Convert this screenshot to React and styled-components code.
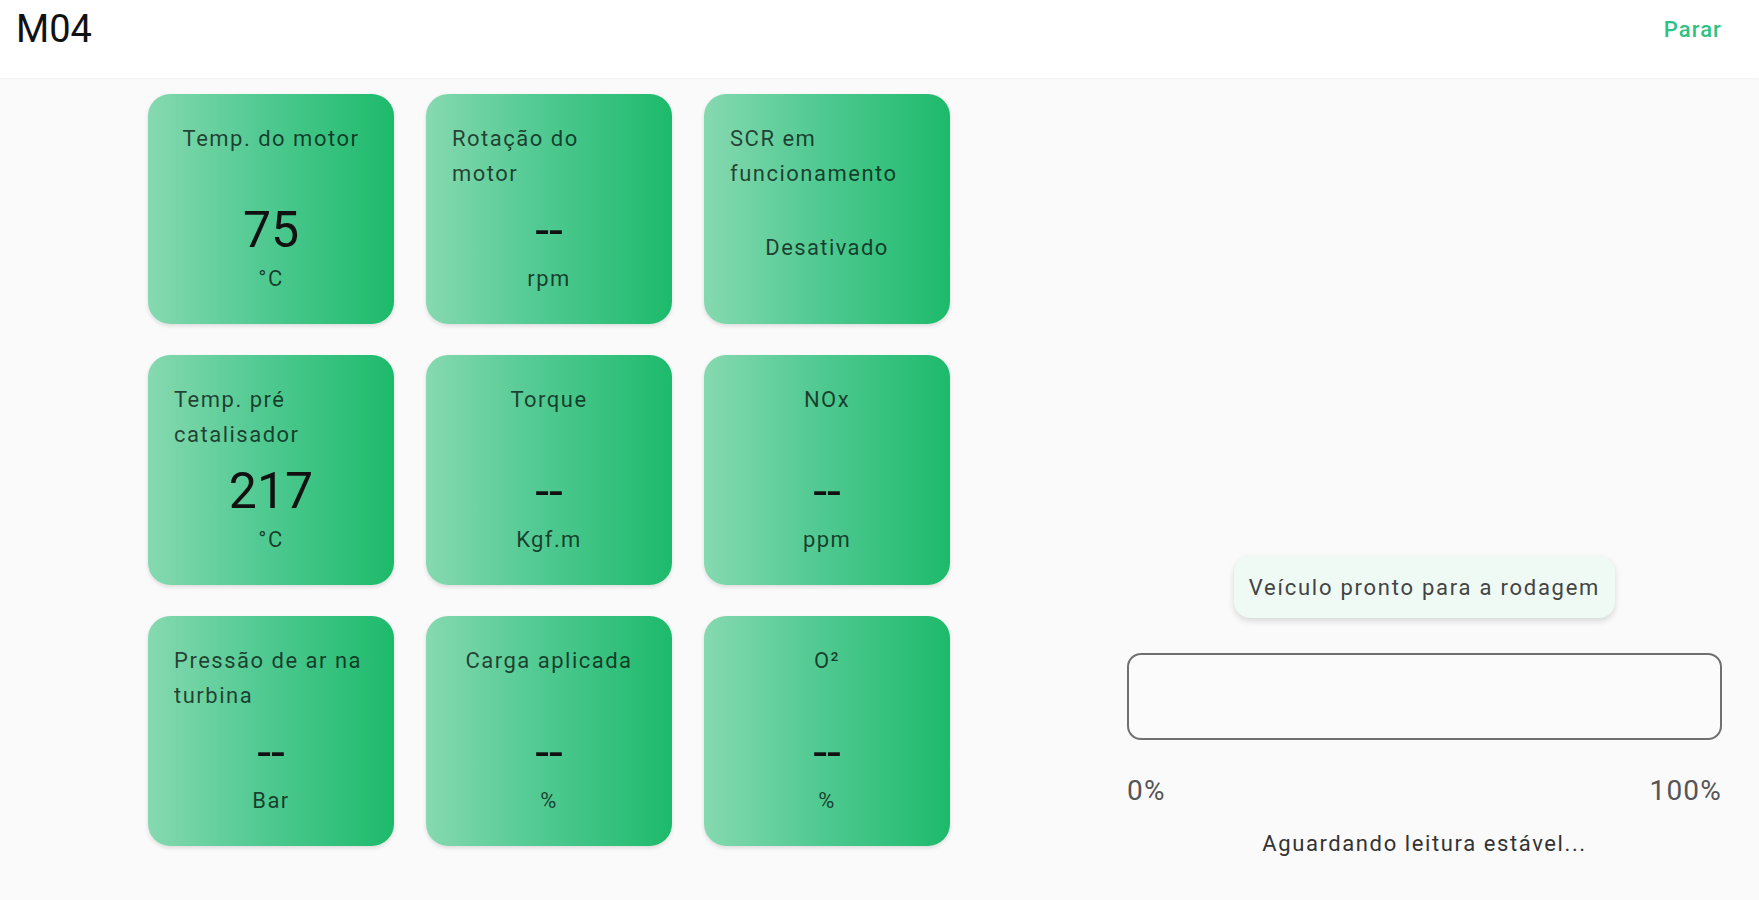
import React from 'react';
import styled, { createGlobalStyle } from 'styled-components';

//------------------------------------------------------------------------------
// CONSTANTS:
//------------------------------------------------------------------------------
const FONT = "Roboto, 'Liberation Sans', sans-serif";

const READINGS = [
  { title: 'Temp. do motor', value: '75', unit: '°C' },
  { title: 'Rotação do motor', value: '--', unit: 'rpm' },
  { title: 'SCR em funcionamento', status: 'Desativado' },
  { title: 'Temp. pré catalisador', value: '217', unit: '°C' },
  { title: 'Torque', value: '--', unit: 'Kgf.m' },
  { title: 'NOx', value: '--', unit: 'ppm' },
  { title: 'Pressão de ar na turbina', value: '--', unit: 'Bar' },
  { title: 'Carga aplicada', value: '--', unit: '%' },
  { title: 'O²', value: '--', unit: '%' },
];

//------------------------------------------------------------------------------
// STYLES:
//------------------------------------------------------------------------------
const GlobalStyle = createGlobalStyle`
  html, body {
    margin: 0;
    padding: 0;
    background: #fafafa;
    font-family: ${FONT};
  }
  * {
    box-sizing: border-box;
  }
`;

const Page = styled.div`
  display: flex;
  flex-direction: column;
  min-height: 100vh;
  background: #fafafa;
`;

const Header = styled.header`
  display: flex;
  align-items: flex-start;
  justify-content: space-between;
  height: 78px;
  padding: 7px 37px 0 16px;
  background: #ffffff;
  box-shadow: 0 1px 3px rgba(0, 0, 0, 0.04);
`;

const Title = styled.h1`
  margin: 0;
  font-size: 38px;
  font-weight: 400;
  line-height: 44px;
  color: #111;
`;

const StopButton = styled.button`
  margin-top: 8px;
  padding: 0;
  border: none;
  background: transparent;
  font-family: ${FONT};
  font-size: 22px;
  font-weight: 500;
  letter-spacing: 1.1px;
  line-height: 30px;
  color: #2fc184;
  cursor: pointer;
`;

const Main = styled.main`
  flex: 1;
  display: flex;
  align-items: stretch;
`;

const Grid = styled.div`
  display: grid;
  grid-template-columns: repeat(3, 246px);
  grid-auto-rows: 230px;
  column-gap: 32px;
  row-gap: 31px;
  padding: 16px 0 0 148px;
  align-content: start;
`;

const Card = styled.div`
  display: flex;
  flex-direction: column;
  align-items: center;
  padding: 27px 26px 20px;
  border-radius: 22px;
  background: linear-gradient(to right, #86d9b0 0%, #52ca93 45%, #1dba6b 100%);
  box-shadow: 0 2px 4px rgba(0, 0, 0, 0.12);
`;

const CardTitle = styled.div`
  height: 70px;
  max-width: 100%;
  font-size: 22px;
  letter-spacing: 1.5px;
  line-height: 35px;
  text-align: left;
  color: rgba(0, 0, 0, 0.7);
`;

const CardBody = styled.div`
  flex: 1;
  display: flex;
  flex-direction: column;
  align-items: center;
  justify-content: center;
  gap: 6px;
`;

const Value = styled.div`
  font-size: 50px;
  line-height: 56px;
  color: #111;
`;

const Unit = styled.div`
  font-size: 22px;
  letter-spacing: 1.4px;
  line-height: 30px;
  color: rgba(0, 0, 0, 0.7);
`;

const Side = styled.section`
  display: flex;
  flex-direction: column;
  justify-content: flex-end;
  width: 595px;
  margin: 0 37px 0 auto;
  padding-bottom: 41px;
`;

const Chip = styled.div`
  align-self: center;
  display: flex;
  align-items: center;
  height: 62px;
  padding: 0 15px;
  border-radius: 16px;
  background: #effaf4;
  box-shadow: 0 3px 6px rgba(0, 0, 0, 0.14);
  font-size: 22px;
  letter-spacing: 1.75px;
  color: #444;
`;

const Bar = styled.div`
  height: 87px;
  margin-top: 35px;
  border: 2px solid #707070;
  border-radius: 14px;
  background: #fbfbfb;
  overflow: hidden;
`;

const Fill = styled.div`
  height: 100%;
  background: #2fc184;
`;

const Scale = styled.div`
  display: flex;
  justify-content: space-between;
  margin-top: 34px;
  font-size: 28px;
  letter-spacing: 1.2px;
  line-height: 34px;
  color: #555;
`;

const Status = styled.div`
  margin-top: 21px;
  font-size: 22px;
  letter-spacing: 1.6px;
  line-height: 30px;
  text-align: center;
  color: #333;
`;

//------------------------------------------------------------------------------
// COMPONENTS:
//------------------------------------------------------------------------------
const ReadingCard = ({ title, value, unit, status }) => (
  <Card>
    <CardTitle>{title}</CardTitle>
    <CardBody>
      {status ? (
        <Unit>{status}</Unit>
      ) : (
        <>
          <Value>{value}</Value>
          <Unit>{unit}</Unit>
        </>
      )}
    </CardBody>
  </Card>
);

const App = () => {
  const progress = 0;

  return (
    <Page>
      <GlobalStyle />
      <Header>
        <Title>M04</Title>
        <StopButton type="button">Parar</StopButton>
      </Header>
      <Main>
        <Grid>
          {READINGS.map((r) => (
            <ReadingCard key={r.title} {...r} />
          ))}
        </Grid>
        <Side>
          <Chip>Veículo pronto para a rodagem</Chip>
          <Bar>
            <Fill style={{ width: `${progress}%` }} />
          </Bar>
          <Scale>
            <span>0%</span>
            <span>100%</span>
          </Scale>
          <Status>Aguardando leitura estável...</Status>
        </Side>
      </Main>
    </Page>
  );
};

export default App;
